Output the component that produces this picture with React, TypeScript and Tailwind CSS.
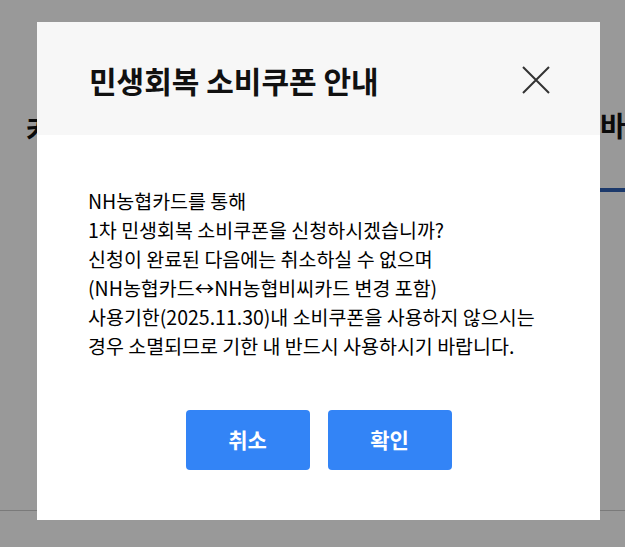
const FONT = "font-['Noto_Sans_CJK_KR','Noto_Sans',sans-serif]"

const LINES = [
  "NH농협카드를 통해",
  "1차 민생회복 소비쿠폰을 신청하시겠습니까?",
  "신청이 완료된 다음에는 취소하실 수 없으며",
  "(NH농협카드↔NH농협비씨카드 변경 포함)",
  "사용기한(2025.11.30)내 소비쿠폰을 사용하지 않으시는",
  "경우 소멸되므로 기한 내 반드시 사용하시기 바랍니다.",
]

export default function App() {
  return (
    <div className={`relative w-[625px] h-[547px] overflow-hidden bg-white text-[#111] ${FONT}`}>
      {/* page behind the dialog */}
      <div className="h-[192px] flex">
        <div className="w-[312px] overflow-hidden flex items-end pb-[42px] pl-[26px] text-[28px] font-bold whitespace-nowrap">카드 신청</div>
        <div className="w-[313px] overflow-hidden flex items-end pb-[42px] pl-[288px] text-[28px] font-bold border-b-[4px] border-[#2f5fb3] whitespace-nowrap">바로가기</div>
      </div>
      <div className="h-[319px] border-b border-[#ccc]" />

      {/* overlay */}
      <div className="absolute inset-0 bg-black/40 pt-[22px] pl-[37px]">
        <div className="w-[563px] bg-white">
          <div className="h-[113px] bg-[#f7f7f7] flex items-center justify-between pl-[52px] pr-[50px]">
            <h2 className="text-[30px] font-bold pt-[3px]">민생회복 소비쿠폰 안내</h2>
            <button className="text-[#333] pt-[3px]">
              <svg width="28" height="28" viewBox="0 0 28 28" fill="none" stroke="currentColor" strokeWidth="2">
                <path d="M1 1L27 27M27 1L1 27" />
              </svg>
            </button>
          </div>
          <div className="pt-[51px] pb-[50px] pl-[51px]">
            <div className="text-[19.5px] leading-[29px] font-normal text-black">
              {LINES.map((l) => (
                <p key={l}>{l}</p>
              ))}
            </div>
            <div className="flex justify-center gap-[18px] mt-[50px] -ml-[51px]">
              <button className="w-[124px] h-[60px] rounded-[4px] bg-[#3384f6] text-white text-[21px] font-bold">취소</button>
              <button className="w-[124px] h-[60px] rounded-[4px] bg-[#3384f6] text-white text-[21px] font-bold">확인</button>
            </div>
          </div>
        </div>
      </div>
    </div>
  )
}
